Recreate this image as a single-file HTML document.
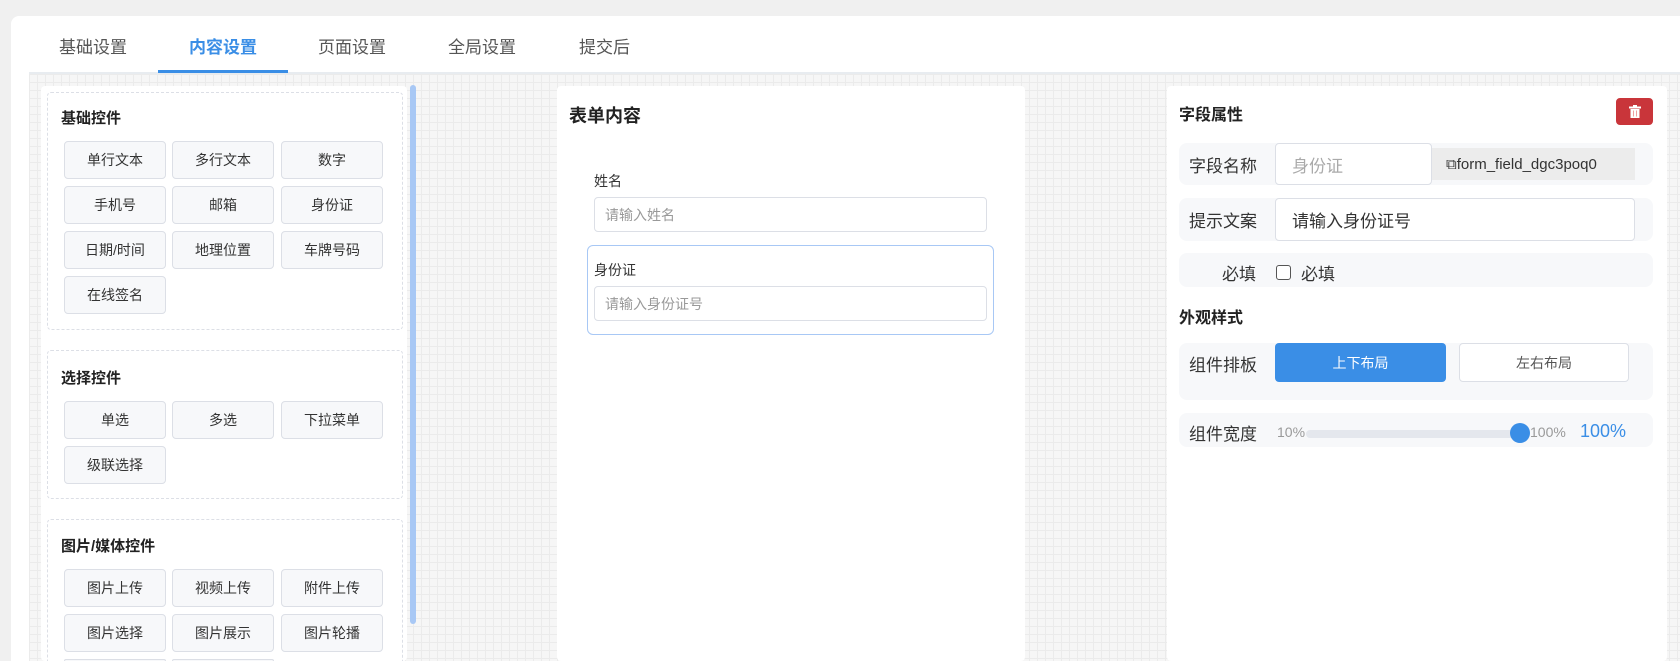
<!DOCTYPE html>
<html style="overflow:hidden;height:661px"><head><meta charset="utf-8"><style>
*{box-sizing:border-box;margin:0;padding:0}
body{width:1680px;height:661px;overflow:hidden;background:#f0f0f0;font-family:"Liberation Sans","Noto Sans CJK SC",sans-serif;color:#333;position:relative}
#wrap{position:absolute;left:0;top:0;width:1680px;height:661px;overflow:hidden}
.abs{position:absolute}
.card{left:11px;top:16px;width:1669px;height:645px;background:#fff;border-radius:8px 0 0 0}
.tab{top:33px;font-size:17px;color:#555}
.grid{left:29px;top:72px;width:1651px;height:589px;background-color:#f6f6f6;background-image:linear-gradient(#ebebeb 1px,transparent 1px),linear-gradient(90deg,#ebebeb 1px,transparent 1px);background-size:8px 8px;border-top:2px solid #e8ecf0}
.panel{background:#fff;border-radius:4px}
.box{border:1px dashed #dcdfe6;border-radius:4px}
.ttl{font-size:15px;font-weight:bold;color:#222}
.btn{width:102px;height:38px;background:#f7f8fa;border:1px solid #dcdfe6;border-radius:4px;font-size:14px;color:#333;display:flex;align-items:center;justify-content:center}
.inp{border:1px solid #dcdfe6;border-radius:4px;background:#fff;font-size:14px;color:#999;padding-left:10px;display:flex;align-items:center}
.row{background:#f7f8fa;border-radius:8px}
.lbl{font-size:17px;color:#333}
</style></head><body><div id="wrap">
<div class="abs card"></div>
<div class="abs tab" style="left:59px">基础设置</div>
<div class="abs tab" style="left:189px;color:#3a8ee6;font-weight:bold">内容设置</div>
<div class="abs tab" style="left:318px">页面设置</div>
<div class="abs tab" style="left:448px">全局设置</div>
<div class="abs tab" style="left:579px">提交后</div>
<div class="abs grid"></div>
<div class="abs" style="left:158px;top:70px;width:130px;height:3px;background:#3a8ee6"></div>

<div class="abs panel" style="left:41px;top:86px;width:366px;height:575px"></div>
<div class="abs" style="left:410px;top:85px;width:6px;height:539px;background:#a8c8f5;border-radius:3px"></div>

<div class="abs box" style="left:47px;top:92px;width:356px;height:238px"></div>
<div class="abs ttl" style="left:61px;top:107px">基础控件</div>
<div class="abs btn" style="left:64px;top:141px">单行文本</div>
<div class="abs btn" style="left:172px;top:141px">多行文本</div>
<div class="abs btn" style="left:281px;top:141px">数字</div>
<div class="abs btn" style="left:64px;top:186px">手机号</div>
<div class="abs btn" style="left:172px;top:186px">邮箱</div>
<div class="abs btn" style="left:281px;top:186px">身份证</div>
<div class="abs btn" style="left:64px;top:231px">日期/时间</div>
<div class="abs btn" style="left:172px;top:231px">地理位置</div>
<div class="abs btn" style="left:281px;top:231px">车牌号码</div>
<div class="abs btn" style="left:64px;top:276px">在线签名</div>

<div class="abs box" style="left:47px;top:350px;width:356px;height:149px"></div>
<div class="abs ttl" style="left:61px;top:367px">选择控件</div>
<div class="abs btn" style="left:64px;top:401px">单选</div>
<div class="abs btn" style="left:172px;top:401px">多选</div>
<div class="abs btn" style="left:281px;top:401px">下拉菜单</div>
<div class="abs btn" style="left:64px;top:446px">级联选择</div>

<div class="abs box" style="left:47px;top:519px;width:356px;height:142px;border-bottom:none;border-radius:4px 4px 0 0"></div>
<div class="abs ttl" style="left:61px;top:535px">图片/媒体控件</div>
<div class="abs btn" style="left:64px;top:569px">图片上传</div>
<div class="abs btn" style="left:172px;top:569px">视频上传</div>
<div class="abs btn" style="left:281px;top:569px">附件上传</div>
<div class="abs btn" style="left:64px;top:614px">图片选择</div>
<div class="abs btn" style="left:172px;top:614px">图片展示</div>
<div class="abs btn" style="left:281px;top:614px">图片轮播</div>
<div class="abs btn" style="left:64px;top:659px;height:2px;border-bottom:none;border-radius:4px 4px 0 0"></div>
<div class="abs btn" style="left:172px;top:659px;height:2px;border-bottom:none;border-radius:4px 4px 0 0"></div>

<div class="abs panel" style="left:557px;top:86px;width:468px;height:575px"></div>
<div class="abs" style="left:569px;top:102px;font-size:18px;font-weight:bold;color:#222">表单内容</div>
<div class="abs" style="left:594px;top:171px;font-size:14px">姓名</div>
<div class="abs inp" style="left:594px;top:197px;width:393px;height:35px">请输入姓名</div>
<div class="abs" style="left:587px;top:245px;width:407px;height:90px;border:1px solid #a8c8f5;border-radius:6px"></div>
<div class="abs" style="left:594px;top:260px;font-size:14px">身份证</div>
<div class="abs inp" style="left:594px;top:286px;width:393px;height:35px">请输入身份证号</div>

<div class="abs panel" style="left:1167px;top:86px;width:500px;height:575px"></div>
<div class="abs ttl" style="left:1179px;top:101px;font-size:16px">字段属性</div>
<div class="abs" style="left:1616px;top:98px;width:37px;height:27px;background:#c9353a;border-radius:4px;display:flex;align-items:center;justify-content:center">
<svg width="12" height="13" viewBox="0 0 12 13"><rect x="0" y="1.5" width="12" height="2" fill="#fff"/><rect x="4" y="0" width="4" height="2" fill="#fff"/><rect x="1.5" y="4" width="9" height="9" fill="#fff"/><rect x="4" y="5.5" width="1" height="6" fill="#f0a0a0"/><rect x="7" y="5.5" width="1" height="6" fill="#f0a0a0"/></svg></div>

<div class="abs row" style="left:1179px;top:143px;width:474px;height:42px"></div>
<div class="abs lbl" style="left:1189px;top:152px">字段名称</div>
<div class="abs inp" style="left:1275px;top:143px;width:157px;height:42px;font-size:17px;color:#aaa;padding-left:16px">身份证</div>
<div class="abs" style="left:1432px;top:148px;width:203px;height:32px;background:#ececec;font-size:15px;color:#333;display:flex;align-items:center;padding-left:14px">⧉form_field_dgc3poq0</div>

<div class="abs row" style="left:1179px;top:198px;width:474px;height:43px"></div>
<div class="abs lbl" style="left:1189px;top:207px">提示文案</div>
<div class="abs inp" style="left:1275px;top:198px;width:360px;height:43px;font-size:17px;color:#333;padding-left:16px">请输入身份证号</div>

<div class="abs row" style="left:1179px;top:253px;width:474px;height:34px"></div>
<div class="abs lbl" style="left:1222px;top:260px">必填</div>
<div class="abs" style="left:1276px;top:265px;width:15px;height:15px;border:1.5px solid #555;border-radius:3px;background:#fff"></div>
<div class="abs lbl" style="left:1301px;top:260px">必填</div>

<div class="abs ttl" style="left:1179px;top:304px;font-size:16px">外观样式</div>
<div class="abs row" style="left:1179px;top:343px;width:474px;height:57px"></div>
<div class="abs lbl" style="left:1189px;top:351px">组件排板</div>
<div class="abs" style="left:1275px;top:343px;width:171px;height:39px;background:#3a8ee6;border-radius:4px;color:#fff;font-size:14px;display:flex;align-items:center;justify-content:center">上下布局</div>
<div class="abs" style="left:1459px;top:343px;width:170px;height:39px;background:#fff;border:1px solid #dcdfe6;border-radius:4px;color:#555;font-size:14px;display:flex;align-items:center;justify-content:center">左右布局</div>

<div class="abs row" style="left:1179px;top:413px;width:474px;height:34px"></div>
<div class="abs lbl" style="left:1189px;top:420px">组件宽度</div>
<div class="abs" style="left:1277px;top:424px;font-size:14px;color:#999">10%</div>
<div class="abs" style="left:1306px;top:430px;width:215px;height:8px;background:#e4e7ed;border-radius:4px"></div>
<div class="abs" style="left:1510px;top:423px;width:20px;height:20px;background:#3a8ee6;border-radius:50%"></div>
<div class="abs" style="left:1530px;top:424px;font-size:14px;color:#999">100%</div>
<div class="abs" style="left:1580px;top:421px;font-size:18px;color:#3a8ee6">100%</div>
</div></body></html>
